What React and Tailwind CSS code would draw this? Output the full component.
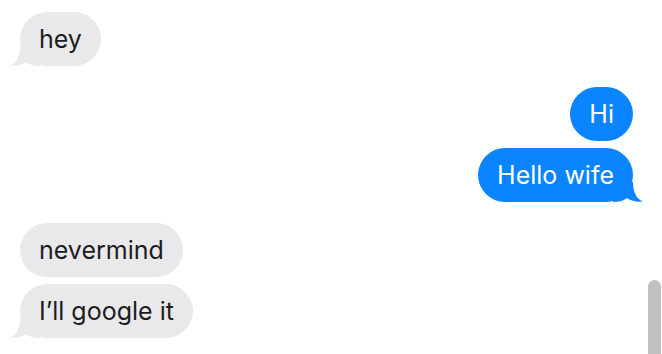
import React from 'react';

const messages = [
    { from: 'them', items: ['hey'] },
    { from: 'me', items: ['Hi', 'Hello wife'] },
    { from: 'them', items: ['nevermind', 'I\u2019ll google it'] },
];

const Tail = ({ color, mine }) => (
    <svg
        width="30"
        height="22"
        viewBox="0 0 30 22"
        className={`absolute bottom-0 ${mine ? '-right-[10px] -scale-x-100' : '-left-[10px]'}`}
    >
        <path
            d="M10 2 C10 13 6 19 0 21.6 C6 22.2 11.5 21 16 18 C20 21 25 22 30 22 L30 2 Z"
            fill={color}
        />
    </svg>
);

const Bubble = ({ text, mine, tail }) => {
    const color = mine ? '#0a84ff' : '#e9e9eb';
    return (
        <div
            className={`relative flex h-[54px] items-center rounded-[27px] px-[19px] text-[25px] leading-none ${mine ? 'bg-[#0a84ff] text-white' : 'bg-[#e9e9eb] text-[#1d1d1f]'
                }`}
        >
            {tail && <Tail color={color} mine={mine} />}
            <span className="relative">{text}</span>
        </div>
    );
};

export default function App() {
    return (
        <div
            className="relative h-[354px] w-full overflow-hidden bg-white"
            style={{ fontFamily: "Inter, 'Liberation Sans', sans-serif" }}
        >
            <div className="flex flex-col gap-[21px] px-[20px] pt-[12px]">
                {messages.map((group, gi) => (
                    <div
                        key={gi}
                        className={`flex flex-col gap-[7px] ${group.from === 'me' ? 'items-end pr-[9px]' : 'items-start'}`}
                    >
                        {group.items.map((text, i) => (
                            <Bubble
                                key={i}
                                text={text}
                                mine={group.from === 'me'}
                                tail={i === group.items.length - 1}
                            />
                        ))}
                    </div>
                ))}
            </div>

            {/* overlay scrollbar */}
            <div className="absolute right-[1px] top-[280px] h-[100px] w-[13px] rounded-full bg-[#c1c1c1]" />
        </div>
    );
}
